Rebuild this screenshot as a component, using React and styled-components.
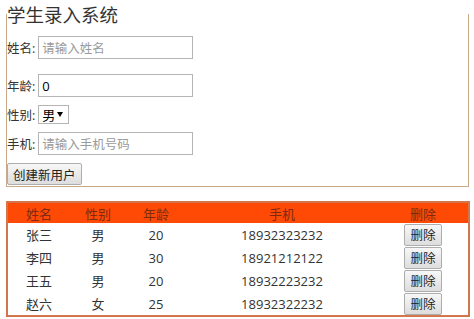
import React from 'react'
import styled, {createGlobalStyle} from 'styled-components'

const GlobalStyle = createGlobalStyle`
  body {
    margin: 0;
    background: #ffffff;
    font-family: "Open Sans", "Noto Sans CJK SC", sans-serif;
    color: #333333;
  }
`

const students = [
  {name: '张三', sex: '男', age: 20, phone: '18932323232'},
  {name: '李四', sex: '男', age: 30, phone: '18921212122'},
  {name: '王五', sex: '男', age: 20, phone: '18932223232'},
  {name: '赵六', sex: '女', age: 25, phone: '18932322232'},
]

const Page = styled.div`
  padding: 0 0 0 6px;
  width: 463px;
`

const Panel = styled.div`
  margin-top: 14px;
  display: flex;
  flex-direction: column;
  align-items: flex-start;
  border: 1px solid #c9aa88;
  border-top: none;
  padding-bottom: 1px;
`

const Title = styled.h2`
  margin: -11px 0 0 0;
  font-size: 18.5px;
  line-height: 24px;
  font-weight: normal;
  color: #333;
`

const Row = styled.div`
  display: flex;
  align-items: center;
  gap: 3px;
  margin-top: ${p => p.$gap}px;
  font-size: 12.5px;
`

const Label = styled.span`
  color: #333;
`

const TextInput = styled.input`
  box-sizing: border-box;
  width: 155px;
  height: 23px;
  border: 1px solid #b5b5b5;
  padding: 0 3px;
  font-family: inherit;
  font-size: 13px;
  color: #000;
  outline: none;
  &::placeholder {
    color: #9a9a9a;
    font-size: 12.5px;
  }
`

const SelectBox = styled.div`
  position: relative;
  width: 31px;
  height: 19px;
`

const Select = styled.select`
  appearance: none;
  box-sizing: border-box;
  width: 100%;
  height: 100%;
  border: 1px solid #b5b5b5;
  background: #fff;
  padding: 0 0 0 3px;
  font-family: inherit;
  font-size: 13px;
  color: #000;
  outline: none;
`

const Caret = styled.span`
  position: absolute;
  right: 6px;
  top: 7px;
  width: 0;
  height: 0;
  border-left: 3px solid transparent;
  border-right: 3px solid transparent;
  border-top: 5px solid #000;
  pointer-events: none;
`

const Button = styled.button`
  box-sizing: border-box;
  height: ${p => p.$h || 22}px;
  padding: 0 ${p => p.$pad || 5}px;
  border: 1px solid #adadad;
  border-radius: 2px;
  background: linear-gradient(#f7f7f7, #dddddd);
  font-family: inherit;
  font-size: 12.5px;
  color: #222;
`

const Table = styled.table`
  margin-top: 14px;
  width: 462px;
  border-collapse: collapse;
  border: 2px solid #d3764d;
  font-size: 13px;
  table-layout: fixed;
`

const Th = styled.th`
  background: #ff4a05;
  color: #7d2a10;
  font-weight: normal;
  height: 20px;
  padding: 0;
  width: ${p => p.$w}px;
`

const Td = styled.td`
  text-align: center;
  height: 23px;
  padding: 0;
  color: #333;
`

export default function App() {
  return (
    <Page>
      <GlobalStyle/>
      <Panel>
        <Title>学生录入系统</Title>
        <Row $gap={9}>
          <Label>姓名:</Label>
          <TextInput placeholder='请输入姓名'/>
        </Row>
        <Row $gap={15}>
          <Label>年龄:</Label>
          <TextInput defaultValue='0'/>
        </Row>
        <Row $gap={8}>
          <Label>性别:</Label>
          <SelectBox>
            <Select defaultValue='男'>
              <option>男</option>
              <option>女</option>
            </Select>
            <Caret/>
          </SelectBox>
        </Row>
        <Row $gap={8}>
          <Label>手机:</Label>
          <TextInput placeholder='请输入手机号码'/>
        </Row>
        <Row $gap={8}>
          <Button>创建新用户</Button>
        </Row>
      </Panel>
      <Table>
        <thead>
          <tr>
            <Th $w={62}>姓名</Th>
            <Th $w={56}>性别</Th>
            <Th $w={60}>年龄</Th>
            <Th $w={192}>手机</Th>
            <Th $w={90}>删除</Th>
          </tr>
        </thead>
        <tbody>
          {students.map(s => (
            <tr key={s.phone}>
              <Td>{s.name}</Td>
              <Td>{s.sex}</Td>
              <Td>{s.age}</Td>
              <Td>{s.phone}</Td>
              <Td><Button $h={22} $pad={5}>删除</Button></Td>
            </tr>
          ))}
        </tbody>
      </Table>
    </Page>
  )
}
